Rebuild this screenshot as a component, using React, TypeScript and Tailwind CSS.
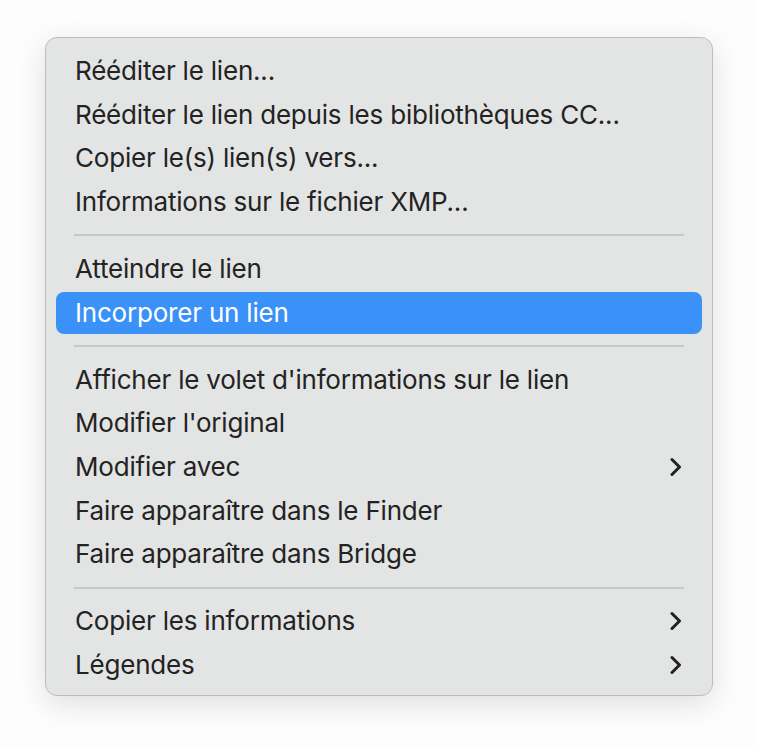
import React from "react";

type Item = { label: string; sub?: boolean; active?: boolean };

const groups: Item[][] = [
  [
    { label: "Rééditer le lien..." },
    { label: "Rééditer le lien depuis les bibliothèques CC..." },
    { label: "Copier le(s) lien(s) vers..." },
    { label: "Informations sur le fichier XMP..." },
  ],
  [{ label: "Atteindre le lien" }, { label: "Incorporer un lien", active: true }],
  [
    { label: "Afficher le volet d'informations sur le lien" },
    { label: "Modifier l'original" },
    { label: "Modifier avec", sub: true },
    { label: "Faire apparaître dans le Finder" },
    { label: "Faire apparaître dans Bridge" },
  ],
  [
    { label: "Copier les informations", sub: true },
    { label: "Légendes", sub: true },
  ],
];

function Chevron({ white }: { white?: boolean }) {
  return (
    <svg width="12" height="20" viewBox="0 0 12 20" className="shrink-0">
      <path
        d="M2 2.5 L9.5 10 L2 17.5"
        fill="none"
        stroke={white ? "#ffffff" : "#222222"}
        strokeWidth="3"
        strokeLinecap="round"
        strokeLinejoin="round"
      />
    </svg>
  );
}

export default function App() {
  return (
    <div className="w-[758px] h-[750px] bg-[#fdfdfd] pt-[37px] pl-[45px]">
      <div
        className="w-[668px] h-[659px] bg-[#e3e4e4] border border-[#bdbdbd] rounded-[12px] shadow-[0_8px_30px_rgba(0,0,0,0.12)] pt-[11px] pb-[9px] px-[10px] text-[#232323] text-[26px]"
        style={{ fontFamily: "Inter, 'Noto Sans', sans-serif" }}
      >
        {groups.map((g, gi) => (
          <React.Fragment key={gi}>
            {gi > 0 && (
              <div className="h-[23.3px] flex items-center px-[18px]">
                <div className="w-full h-[2px] bg-[#c8c8c8]" />
              </div>
            )}
            {g.map((it) => (
              <div key={it.label} className="h-[43.7px] flex items-center">
                <div
                  className={
                    "w-full h-[42px] flex items-center justify-between pl-[19px] pr-[20px] rounded-[8px] " +
                    (it.active ? "bg-[#3a91f7] text-white" : "")
                  }
                >
                  <span className="tracking-[-0.2px] leading-none">{it.label}</span>
                  {it.sub && <Chevron white={it.active} />}
                </div>
              </div>
            ))}
          </React.Fragment>
        ))}
      </div>
    </div>
  );
}
